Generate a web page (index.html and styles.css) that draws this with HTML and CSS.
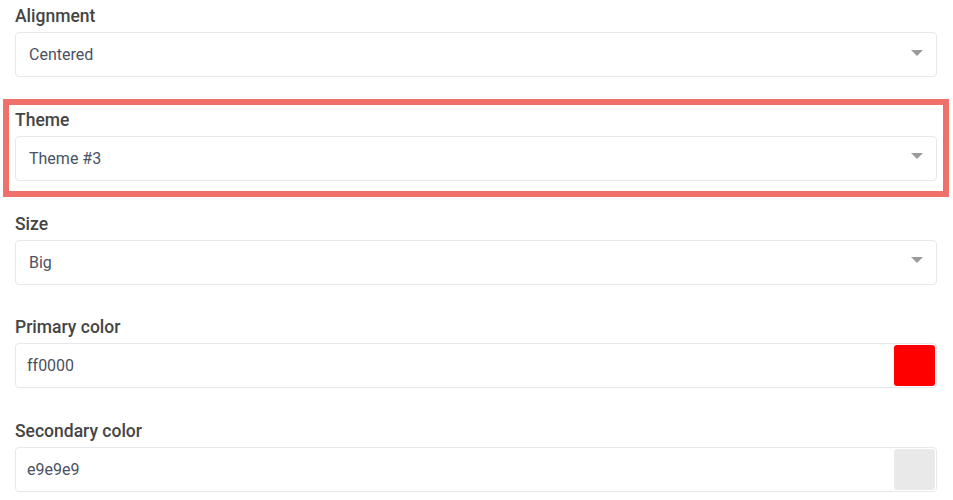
FILE: index.html
```html
<!DOCTYPE html>
<html lang="en">
<head>
<meta charset="utf-8">
<title>Settings</title>
<link rel="stylesheet" href="styles.css">
</head>
<body>
<div class="form">
  <div class="field">
    <div class="label">Alignment</div>
    <div class="control select">
      <span class="value">Centered</span>
      <span class="caret"></span>
    </div>
  </div>
  <div class="field highlighted">
    <div class="label">Theme</div>
    <div class="control select">
      <span class="value">Theme #3</span>
      <span class="caret"></span>
    </div>
  </div>
  <div class="field">
    <div class="label">Size</div>
    <div class="control select">
      <span class="value">Big</span>
      <span class="caret"></span>
    </div>
  </div>
  <div class="field">
    <div class="label">Primary color</div>
    <div class="control color">
      <span class="value">ff0000</span>
      <span class="swatch" style="background:#ff0000"></span>
    </div>
  </div>
  <div class="field">
    <div class="label">Secondary color</div>
    <div class="control color">
      <span class="value">e9e9e9</span>
      <span class="swatch" style="background:#e9e9e9"></span>
    </div>
  </div>
</div>
</body>
</html>
```
FILE: styles.css
```css
html, body {
  margin: 0;
  padding: 0;
  background: #ffffff;
  overflow: hidden;
}
body {
  font-family: Roboto, "Liberation Sans", Arial, sans-serif;
}
.form {
  display: flex;
  flex-direction: column;
  gap: 30.75px;
  padding: 4px 16px 0 15px;
}
.field {
  position: relative;
  display: flex;
  flex-direction: column;
  gap: 4px;
}
.highlighted::after {
  content: "";
  position: absolute;
  top: -9px;
  left: -12px;
  right: -12px;
  bottom: -16px;
  border: 6px solid #f0706a;
  pointer-events: none;
}
.label {
  font-size: 17.5px;
  font-weight: 500;
  line-height: 24px;
  color: #454545;
}
.control {
  box-sizing: border-box;
  height: 45px;
  border: 1px solid #e6e8ec;
  border-radius: 4px;
  display: flex;
  align-items: center;
  justify-content: space-between;
  font-size: 16px;
  color: #4a5263;
}
.select {
  padding: 0 13px 0 13px;
}
.color {
  padding: 0 1px 0 11px;
}
.caret {
  width: 0;
  height: 0;
  border-left: 6px solid transparent;
  border-right: 6px solid transparent;
  border-top: 6px solid #9b9b9b;
  margin-top: -4px;
}
.swatch {
  width: 41px;
  height: 41px;
  border-radius: 3px;
}
```
